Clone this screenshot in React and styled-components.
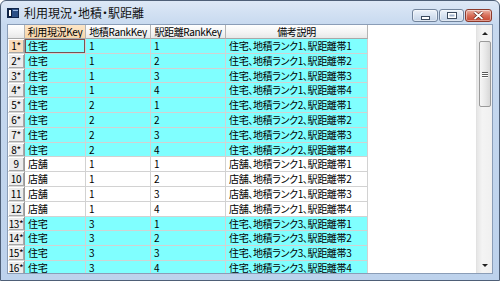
import React from "react";
import styled, { createGlobalStyle } from "styled-components";

const GlobalStyle = createGlobalStyle`
  html, body { margin: 0; padding: 0; background: #fff; }
  body {
    width: 500px;
    height: 281px;
    overflow: hidden;
    font-family: "Noto Sans CJK JP", "Noto Sans", sans-serif;
  }
`;

const Window = styled.div`
  box-sizing: border-box;
  width: 500px;
  height: 281px;
  border: 1px solid #4e5f77;
  border-radius: 6px 6px 0 0;
  background: linear-gradient(#dde8f6, #c7d9ef 24px, #bdd2ec);
  display: flex;
  flex-direction: column;
  padding: 0 6px 6px 6px;
`;

const TitleBar = styled.div`
  height: 23px;
  flex: none;
  display: flex;
  align-items: center;
`;

const TitleText = styled.span`
  margin-left: 5px;
  font-size: 12px;
  line-height: 14px;
  color: #111;
  font-feature-settings: "palt";
  flex: 1;
`;

const Buttons = styled.div`
  display: flex;
  gap: 1px;
  align-self: flex-start;
  margin-top: 8px;
  margin-right: 1px;
`;

const CapButton = styled.div`
  box-sizing: border-box;
  width: ${(p) => p.$w}px;
  height: 13px;
  border: 1px solid ${(p) => (p.$close ? "#8c3a2c" : "#71839b")};
  border-radius: 3px;
  background: ${(p) =>
    p.$close
      ? "linear-gradient(#ecb3a4, #d86f5a 50%, #c64731)"
      : "linear-gradient(#eef3fa, #d8e3f1 50%, #c5d4e7)"};
  display: flex;
  align-items: center;
  justify-content: center;
  box-shadow: inset 0 0 0 1px rgba(255, 255, 255, 0.45);
`;

const Client = styled.div`
  flex: 1;
  min-height: 0;
  border: 1px solid #8a9db7;
  background: #fff;
  display: flex;
  overflow: hidden;
`;

const GridArea = styled.div`
  flex: 1;
  overflow: hidden;
`;

const Table = styled.table`
  border-collapse: separate;
  border-spacing: 0;
  table-layout: fixed;
  width: 360px;
  font-size: 10px;
  font-feature-settings: "palt";
  letter-spacing: -0.35px;
  color: #000;
`;

const HeadCell = styled.th`
  height: 13px;
  padding: 0;
  line-height: 13px;
  font-weight: normal;
  text-align: center;
  white-space: nowrap;
  overflow: hidden;
  border-right: 1px solid #b4b4b4;
  border-bottom: 1px solid #a8a8a8;
  background: ${(p) =>
    p.$current
      ? "linear-gradient(#fde6c8, #f7d5a8)"
      : "linear-gradient(#ffffff, #f3f3f3 60%, #e8e8e8)"};
`;

const RowHead = styled.th`
  height: 13.8px;
  padding: 0;
  line-height: 13.8px;
  font-weight: normal;
  text-align: center;
  white-space: nowrap;
  overflow: hidden;
  border-right: 1px solid #9a9a9a;
  border-bottom: 1px solid #d8d8d8;
  background: ${(p) => (p.$current ? "#f8dcbc" : "#ececec")};
  box-shadow: inset 1px 1px #fff, inset -1px -1px #a8a8a8;
`;

const Cell = styled.td`
  height: 13.8px;
  padding: 0 0 0 3px;
  line-height: 13.8px;
  white-space: nowrap;
  overflow: hidden;
  border-right: 1px solid #d2d2d2;
  border-bottom: 1px solid #d2d2d2;
  background: ${(p) => (p.$new ? "#80ffff" : "#ffffff")};
  box-shadow: ${(p) => (p.$active ? "inset 0 0 0 1px #7a5252" : "none")};
`;

const ScrollBar = styled.div`
  width: 15px;
  flex: none;
  display: flex;
  flex-direction: column;
  background: linear-gradient(90deg, #e6e6e6, #f4f4f4 35%, #f0f0f0);
  border-left: 1px solid #e2e2e2;
`;

const Arrow = styled.div`
  height: 16px;
  flex: none;
  display: flex;
  align-items: center;
  justify-content: center;
  &::after {
    content: "";
    border-left: 3px solid transparent;
    border-right: 3px solid transparent;
    ${(p) =>
      p.$down
        ? "border-top: 3px solid #222;"
        : "border-bottom: 3px solid #222;"}
  }
`;

const Thumb = styled.div`
  height: 66px;
  margin: 0 1px 0 2px;
  flex: none;
  box-sizing: border-box;
  border: 1px solid #9a9a9a;
  border-radius: 2px;
  background: linear-gradient(90deg, #f6f6f6, #e9e9e9 50%, #d8d8d8);
  display: flex;
  flex-direction: column;
  align-items: center;
  justify-content: center;
  gap: 1px;
`;

const Grip = styled.div`
  width: 6px;
  height: 1px;
  background: #5a5a5a;
  box-shadow: 0 1px #fff;
`;

const Track = styled.div`
  flex: 1;
`;

const AppIcon = () => (
  <svg width="12" height="12" viewBox="0 0 12 12" style={{ flex: "none" }}>
    <rect x="0.5" y="1.5" width="11" height="9" fill="#2b4f86" stroke="#10264a" />
    <rect x="1" y="2" width="4" height="8" fill="#0d1f3d" />
    <rect x="2" y="3" width="2" height="6" fill="#ffffff" />
    <rect x="6" y="3" width="5" height="1" fill="#9bb8e0" />
  </svg>
);

const columns = [
  { key: "use", label: "利用現況Key", width: 61 },
  { key: "rank", label: "地積RankKey", width: 65 },
  { key: "dist", label: "駅距離RankKey", width: 75 },
  { key: "note", label: "備考説明", width: 142 },
];

const makeRows = () => {
  const rows = [];
  const groups = [
    { use: "住宅", rank: 1, isNew: true },
    { use: "住宅", rank: 2, isNew: true },
    { use: "店舗", rank: 1, isNew: false },
    { use: "住宅", rank: 3, isNew: true },
  ];
  groups.forEach((g) => {
    for (let d = 1; d <= 4; d++) {
      rows.push({
        use: g.use,
        rank: g.rank,
        dist: d,
        note: `${g.use}、地積ランク${g.rank}、駅距離帯${d}`,
        isNew: g.isNew,
      });
    }
  });
  return rows;
};

const rows = makeRows();

export default function App() {
  return (
    <>
      <GlobalStyle />
      <Window>
        <TitleBar>
          <AppIcon />
          <TitleText>利用現況・地積・駅距離</TitleText>
          <Buttons>
            <CapButton $w={26}>
              <svg width="9" height="4" viewBox="0 0 9 4" style={{ marginTop: 4 }}>
                <rect x="0.5" y="0.5" width="8" height="3" fill="#fff" stroke="#3b4a5e" />
              </svg>
            </CapButton>
            <CapButton $w={25}>
              <svg width="10" height="7" viewBox="0 0 10 7">
                <rect x="0.5" y="0.5" width="9" height="6" fill="#fff" stroke="#3b4a5e" />
                <rect x="2.5" y="2.5" width="5" height="2" fill="#9fb2cc" />
              </svg>
            </CapButton>
            <CapButton $w={27} $close>
              <svg width="11" height="9" viewBox="0 0 11 9">
                <path d="M1.5 1 L9.5 8 M9.5 1 L1.5 8" stroke="#5a1a10" strokeWidth="3" />
                <path d="M1.5 1 L9.5 8 M9.5 1 L1.5 8" stroke="#fff" strokeWidth="1.8" />
              </svg>
            </CapButton>
          </Buttons>
        </TitleBar>
        <Client>
          <GridArea>
            <Table>
              <colgroup>
                <col style={{ width: 17 }} />
                {columns.map((c) => (
                  <col key={c.key} style={{ width: c.width }} />
                ))}
              </colgroup>
              <thead>
                <tr>
                  <HeadCell />
                  {columns.map((c, i) => (
                    <HeadCell key={c.key} $current={i === 0}>
                      {c.label}
                    </HeadCell>
                  ))}
                </tr>
              </thead>
              <tbody>
                {rows.map((r, i) => (
                  <tr key={i}>
                    <RowHead $current={i === 0}>
                      {i + 1}
                      {r.isNew ? "*" : ""}
                    </RowHead>
                    {columns.map((c, j) => (
                      <Cell key={c.key} $new={r.isNew} $active={i === 0 && j === 0}>
                        {r[c.key]}
                      </Cell>
                    ))}
                  </tr>
                ))}
              </tbody>
            </Table>
          </GridArea>
          <ScrollBar>
            <Arrow />
            <Thumb>
              <Grip />
              <Grip />
              <Grip />
            </Thumb>
            <Track />
            <Arrow $down />
          </ScrollBar>
        </Client>
      </Window>
    </>
  );
}
